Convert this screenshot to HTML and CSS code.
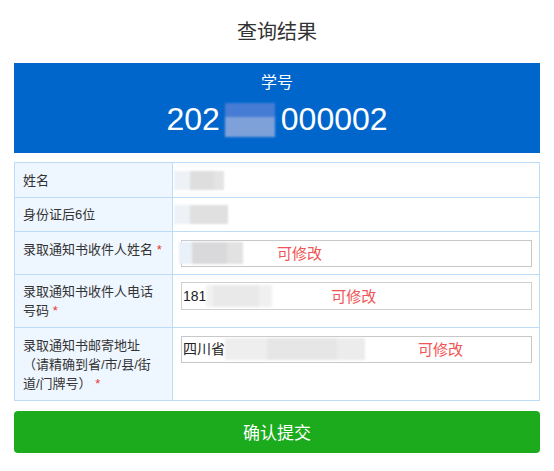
FILE: index.html
```html
<!DOCTYPE html>
<html lang="zh-CN">
<head>
<meta charset="utf-8">
<title>查询结果</title>
<link rel="stylesheet" href="styles.css">
</head>
<body>
<div class="page">
  <h1 class="title">查询结果</h1>
  <div class="idcard">
    <div class="id-label">学号</div>
    <div class="id-number">202<span class="mask-id"></span>000002</div>
  </div>
  <table class="info">
    <colgroup><col class="col-label"><col></colgroup>
    <tr>
      <td class="lab">姓名</td>
      <td class="val"><span class="blur blur-name"></span></td>
    </tr>
    <tr>
      <td class="lab">身份证后6位</td>
      <td class="val"><span class="blur blur-idno"></span></td>
    </tr>
    <tr>
      <td class="lab">录取通知书收件人姓名 <span class="req">*</span></td>
      <td class="val">
        <div class="field f1"><span class="blur blur-recv"></span><span class="edit e1">可修改</span></div>
      </td>
    </tr>
    <tr>
      <td class="lab">录取通知书收件人电话号码 <span class="req">*</span></td>
      <td class="val">
        <div class="field f2"><span class="txt">181</span><span class="blur blur-phone"></span><span class="edit e2">可修改</span></div>
      </td>
    </tr>
    <tr>
      <td class="lab">录取通知书邮寄地址<br>（请精确到省/市/县/街道/门牌号） <span class="req">*</span></td>
      <td class="val">
        <div class="field f3"><span class="txt">四川省</span><span class="blur blur-addr"></span><span class="edit e3">可修改</span></div>
      </td>
    </tr>
  </table>
  <button class="submit" type="button">确认提交</button>
</div>
</body>
</html>
```
FILE: styles.css
```css
html, body {
  margin: 0;
  padding: 0;
  background: #ffffff;
}
body {
  font-family: "Liberation Sans", "Noto Sans CJK SC", sans-serif;
  color: #333333;
}
.page {
  padding: 0 14px;
}
.title {
  margin: 0;
  padding: 18px 0 17px;
  font-size: 20px;
  line-height: 28px;
  font-weight: normal;
  text-align: center;
  color: #333333;
}
.idcard {
  background: #0066cc;
  color: #ffffff;
  text-align: center;
  height: 90px;
  box-sizing: border-box;
  padding-top: 9px;
}
.id-label {
  font-size: 16px;
  line-height: 22px;
}
.id-number {
  margin-top: 5px;
  font-size: 32px;
  line-height: 40px;
  display: flex;
  justify-content: center;
  align-items: center;
}
.mask-id {
  display: inline-block;
  width: 50px;
  height: 34px;
  margin: 2px 6px 0 5px;
  background: linear-gradient(to bottom, #4f7fd6 0 40%, #8da8dc 40% 100%);
  filter: blur(0.8px);
  opacity: 0.9;
}
.info {
  width: 100%;
  margin-top: 9px;
  border-collapse: collapse;
  table-layout: fixed;
  font-size: 13px;
  line-height: 19px;
}
.col-label {
  width: 158px;
}
.info td {
  border: 1px solid #bcdcf8;
  padding: 7.5px 7px 7px 8px;
  vertical-align: top;
}
.info td.lab {
  background: #eef6ff;
  color: #333333;
}
.req {
  color: #e53935;
}
.blur {
  display: inline-block;
  vertical-align: top;
  filter: blur(0.8px);
}
.blur-name {
  width: 50px;
  height: 19px;
  margin: 0 0 0 -7px;
  background: linear-gradient(to right, #eef2f6 0 32%, #dedede 32% 80%, #e4e4e4 80%);
}
.blur-idno {
  width: 54px;
  height: 19px;
  margin: 0 0 0 -7px;
  background: linear-gradient(to right, #eef2f6 0 30%, #e0e0e0 30%);
}
.field {
  display: flex;
  align-items: center;
  height: 27px;
  box-sizing: border-box;
  border: 1px solid #c8c8c8;
  background: #ffffff;
  font-size: 14px;
  color: #222222;
}
.f2 {
  height: 28px;
  border-color: #d0d0d0;
}
.txt {
  padding-left: 1px;
}
.blur-recv {
  width: 64px;
  height: 22px;
  margin-left: -3px;
  background: linear-gradient(to right, #eaf0f8 0 20%, #d9d9dc 20% 75%, #e2e2e2 75%);
}
.blur-phone {
  width: 66px;
  height: 22px;
  background: linear-gradient(to right, #f2f2f2 0 10%, #e9e9e9 10% 80%, #f0f0f0 80%);
}
.blur-addr {
  width: 140px;
  height: 22px;
  background: linear-gradient(to right, #eeeeee 0 30%, #e6e6e6 30% 80%, #ececec 80%);
}
.edit {
  color: #f05454;
  font-size: 15px;
}
.e1 { margin-left: 34px; }
.e2 { margin-left: 59px; }
.e3 { margin-left: 53px; }
.submit {
  display: block;
  width: 100%;
  height: 42px;
  margin-top: 10px;
  border: none;
  border-radius: 4px;
  background: #1bab1d;
  color: #ffffff;
  font-family: "Liberation Sans", "Noto Sans CJK SC", sans-serif;
  font-size: 17px;
  cursor: pointer;
}
```
